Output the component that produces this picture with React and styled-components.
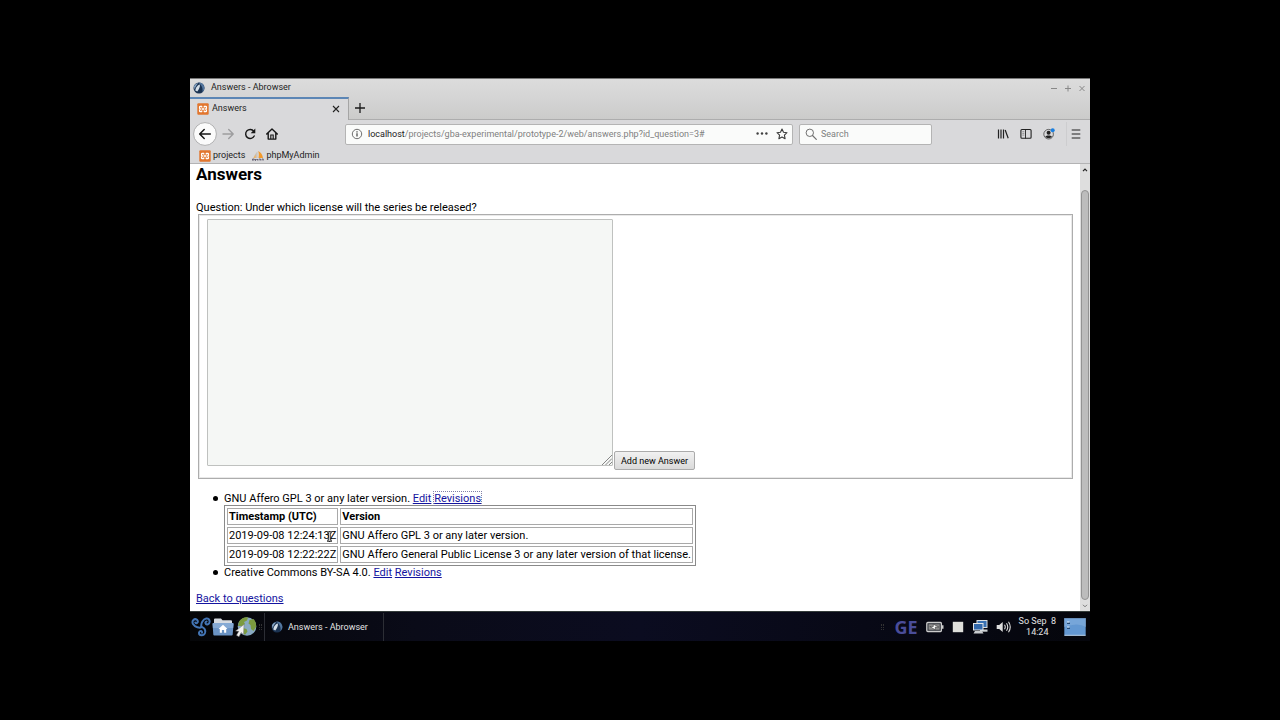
import React, { useState } from "react";
import styled, { createGlobalStyle } from "styled-components";

const revisions = [
	{ time: "2019-09-08 12:24:13Z", version: "GNU Affero GPL 3 or any later version." },
	{
		time: "2019-09-08 12:22:22Z",
		version: "GNU Affero General Public License 3 or any later version of that license.",
	},
];

const AbrowserIcon = () => (
	<svg width="12" height="12" viewBox="0 0 12 12" aria-hidden="true">
		<circle cx="6" cy="6" r="5.500" fill="#1b3352" />
		<path d="M5 .6A5.500 5.500 0 0 1 9.300 10.300C10.300 7 9 3 5 .6z" fill="#54779f" />
		<path d="M2.300 8.600C2.600 6 4.300 3 6.900 2.600 7.300 5 6 7.500 4.300 9.500z" fill="#d4dfe8" />
		<path d="M1 4.200C2 2.200 3.500 1.300 5.300 1.200 3.500 3 2.300 4.800 1.600 7.500z" fill="#8aa9c8" />
	</svg>
);

const XamppIcon = () => (
	<svg width="12" height="12" viewBox="0 0 12 12" aria-hidden="true">
		<rect x=".3" y=".3" width="11.400" height="11.400" rx="1" fill="#e2762e" />
		<path
			d="M5 4.500L4.600 3.300H3.200Q2.600 3.300 2.600 3.900V5.200L3.300 6 2.600 6.800V8.100Q2.600 8.700 3.200 8.700H4.600L5 7.500M7 4.500L7.400 3.300H8.800Q9.400 3.300 9.400 3.900V5.200L8.700 6 9.400 6.800V8.100Q9.400 8.700 8.800 8.700H7.400L7 7.500"
			fill="none"
			stroke="#fff"
			strokeWidth="1.300"
		/>
		<path d="M4.600 6h2.800" stroke="#fff" strokeWidth="1.600" />
	</svg>
);

const PmaIcon = () => (
	<svg width="12" height="12" viewBox="0 0 12 12" aria-hidden="true">
		<path d="M5.500 1.500C3.500 3 2.500 5 2 8h3.500z" fill="#c9c4bd" />
		<path d="M6.200 1C9 2.300 10.500 5 11 8H6.500C7 5.500 6.900 3 6.200 1z" fill="#f39a2b" />
		<path d="M3.500 4.200L1.300 8h2.500z" fill="#edb468" />
		<path d="M.5 10.500V9h1.800v1H.6M3.500 11V9l1 1 1-1v1.500M7 10.500V9h1.500v1.500M10 10.500V9h1.300v1.500" fill="none" stroke="#5a5568" strokeWidth=".8" />
	</svg>
);

const BackIcon = () => (
	<svg width="24" height="24" viewBox="0 0 24 24" aria-hidden="true">
		<circle cx="12" cy="12" r="11.400" fill="#fbfbfb" stroke="#a9a9aa" strokeWidth=".9" />
		<path d="M17.300 12H7M11.200 7.500L6.700 12l4.500 4.500" fill="none" stroke="#161616" strokeWidth="1.500" strokeLinecap="round" strokeLinejoin="round" />
	</svg>
);

const ForwardIcon = () => (
	<svg width="14" height="14" viewBox="0 0 14 14" aria-hidden="true">
		<path d="M2 7h10M7.700 2.500L12.200 7l-4.500 4.500" fill="none" stroke="#9d9d9f" strokeWidth="1.400" strokeLinecap="round" strokeLinejoin="round" />
	</svg>
);

const ReloadIcon = () => (
	<svg width="14" height="14" viewBox="0 0 14 14" aria-hidden="true">
		<path d="M10.800 4.300A4.500 4.500 0 1 0 11.200 9" fill="none" stroke="#161616" strokeWidth="1.400" strokeLinecap="round" />
		<path d="M12.300 1.600v4.600H7.700z" fill="#161616" />
	</svg>
);

const HomeIcon = () => (
	<svg width="14" height="14" viewBox="0 0 14 14" aria-hidden="true">
		<path d="M1.700 7L7 1.900 12.300 7M3.200 6.200v5.900h7.600V6.200" fill="none" stroke="#161616" strokeWidth="1.400" strokeLinecap="round" strokeLinejoin="round" />
		<path d="M5.800 12V8h2.400v4" fill="none" stroke="#161616" strokeWidth="1.100" />
	</svg>
);

const InfoIcon = () => (
	<svg width="12" height="12" viewBox="0 0 12 12" aria-hidden="true">
		<circle cx="6" cy="6" r="4.700" fill="none" stroke="#606060" strokeWidth=".9" />
		<path d="M6 5.300v3.200M6 3.300v1.100" stroke="#404040" strokeWidth="1.200" />
	</svg>
);

const DotsIcon = () => (
	<svg width="12" height="12" viewBox="0 0 12 12" aria-hidden="true">
		<circle cx="1.600" cy="5.500" r="1.200" fill="#404040" />
		<circle cx="6" cy="5.500" r="1.200" fill="#404040" />
		<circle cx="10.400" cy="5.500" r="1.200" fill="#404040" />
	</svg>
);

const StarIcon = () => (
	<svg width="12" height="12" viewBox="0 0 12 12" aria-hidden="true">
		<path d="M6 1.100l1.500 3.200 3.500.4-2.600 2.400.7 3.600L6 9l-3.100 1.700.7-3.600L1 4.700l3.500-.4z" fill="none" stroke="#3a3a3a" strokeWidth="1.100" strokeLinejoin="round" />
	</svg>
);

const SearchIcon = () => (
	<svg width="12" height="12" viewBox="0 0 12 12" aria-hidden="true">
		<circle cx="4.800" cy="4.800" r="3.700" fill="none" stroke="#707070" strokeWidth="1" />
		<path d="M7.500 7.500l3.800 3.800" stroke="#707070" strokeWidth="1.200" strokeLinecap="round" />
	</svg>
);

const LibraryIcon = () => (
	<svg width="12" height="12" viewBox="0 0 12 12" aria-hidden="true">
		<path d="M1.500 1.500v9M4 1.500v9M6.500 1.500v9M8.200 2l3 8.300" fill="none" stroke="#222" strokeWidth="1.200" />
	</svg>
);

const SidebarIcon = () => (
	<svg width="12" height="12" viewBox="0 0 12 12" aria-hidden="true">
		<rect x=".9" y="1.500" width="10.200" height="8.800" rx="1" fill="none" stroke="#222" strokeWidth="1.100" />
		<path d="M5.500 1.500v9" stroke="#222" strokeWidth=".9" />
		<path d="M2.300 3.700h2M2.300 5.400h2M2.300 7.100h2" stroke="#777" strokeWidth=".7" />
	</svg>
);

const AccountIcon = () => (
	<svg width="12" height="12" viewBox="0 0 12 12" aria-hidden="true">
		<circle cx="5.600" cy="6.200" r="4.800" fill="none" stroke="#555" strokeWidth=".9" />
		<circle cx="5.600" cy="4.800" r="2" fill="#222" />
		<path d="M2.200 8.800C3.500 7 7.700 7 9 8.800 7.500 10.600 3.700 10.600 2.200 8.800z" fill="#222" />
		<circle cx="9.700" cy="2.200" r="2" fill="#1a7fe0" />
	</svg>
);

const MenuIcon = () => (
	<svg width="10" height="12" viewBox="0 0 10 12" aria-hidden="true">
		<path d="M.7 2h8.600M.7 6h8.600M.7 10h8.600" stroke="#222" strokeWidth="1.100" />
	</svg>
);

const SwirlIcon = () => (
	<svg width="20" height="20" viewBox="0 0 20 20" aria-hidden="true">
		<g fill="none" stroke="#4375b5" strokeWidth="2" strokeLinecap="round">
			<path d="M10.500 10C8.800 11.500 4 10.300 2 7 .3 3.600 3.500.9 6 2.800 8 4.800 5.500 7.500 4.300 5.500" />
			<path d="M10.500 10C9.500 6.500 12 2.200 15.200 1.600c3.800-.5 4.500 4.400 1.700 5.700-2.700.8-3.300-2.500-1.300-2.800" />
			<path d="M10.500 10c3 .5 4.500 3.300 3.500 6-1.400 3.500-6.200 2.800-6-.3.500-2.500 3.500-2 3 0" />
		</g>
	</svg>
);

const FolderIcon = () => (
	<svg width="22" height="20" viewBox="0 0 22 20" aria-hidden="true">
		<path d="M2 9V2.500Q2 1.500 3 1.500h6l1.500 1.800H19q1 0 1 1V9z" fill="#d6dbe1" />
		<path d="M1.500 6h19q1 0 1 1l-.8 10.500q-.1 1-1 1H2.300q-1 0-1-1L.6 7q0-1 .9-1z" fill="#6b94c5" />
		<path d="M1.500 6h19q1 0 1 1l-.3 4H.9L.6 7q0-1 .9-1z" fill="#86aad4" />
		<path d="M11 7.700l4.500 4.300h-1.300v3.800h-2.100V13H9.900v2.800H7.800V12H6.500z" fill="#fff" />
	</svg>
);

const GlobeIcon = () => (
	<svg width="22" height="22" viewBox="0 0 22 22" aria-hidden="true">
		<circle cx="12" cy="10.500" r="9.300" fill="#89aac2" />
		<path d="M4 5.500C6.500 1.500 11 .5 13 1.500l-1 3-3 1.500 1 2-2.500 2L3 10zM14.500 4l4-1c2 2 3 5 2.500 8l-2.500 4-2.500-2-.5-4-2-1.500zM8 12l3.500 1 1 2.500-2.500 3.300C8 17.500 7.500 15 8 12z" fill="#7c9b3f" />
		<path d="M9 8.500l-.5 10-2.300-2L4 20.700 1.500 19.300l2.300-4L.6 15z" fill="#f3f3f3" stroke="#777" strokeWidth=".5" />
	</svg>
);

const BatteryIcon = () => (
	<svg width="18" height="12" viewBox="0 0 18 12" aria-hidden="true">
		<rect x=".8" y="1.500" width="14.600" height="9" rx="1" fill="#292c35" stroke="#ccc" strokeWidth="1.300" />
		<rect x="2.500" y="3.200" width="11.200" height="5.600" fill="#8d8d8d" />
		<path d="M16 4.300h1.500v3.400H16z" fill="#ccc" />
		<path d="M3.800 5.500h3.500V3.200L12.800 6H9.300v2.800z" fill="#fff" stroke="#222" strokeWidth=".5" />
	</svg>
);

const StopIcon = () => (
	<svg width="12" height="12" viewBox="0 0 12 12" aria-hidden="true">
		<rect x=".8" y=".8" width="10.400" height="10.400" fill="#dfdfdb" />
	</svg>
);

const NetworkIcon = () => (
	<svg width="16" height="16" viewBox="0 0 16 16" aria-hidden="true">
		<rect x="5" y="1.500" width="10" height="7" fill="#3971b3" stroke="#d9dee2" />
		<path d="M8 10.500h7.500v2.200H8z" fill="#ccd0d2" />
		<rect x="1.500" y="4.500" width="9.500" height="6.500" fill="#3268ab" stroke="#e2e5e8" />
		<path d="M3 12h7l1.500 2.500H1.500z" fill="#c9cccf" />
	</svg>
);

const VolumeIcon = () => (
	<svg width="15" height="14" viewBox="0 0 15 14" aria-hidden="true">
		<path d="M.7 5h2.500l3.500-3v10L3.200 9H.7z" fill="#ddd" />
		<path d="M8.500 4.700q1.500 2.300 0 4.600M10.500 3.200q2.500 3.800 0 7.600M12.500 1.700q3.500 5.300 0 10.600" fill="none" stroke="#ddd" strokeWidth="1.100" />
	</svg>
);

const DesktopIcon = () => (
	<svg width="22" height="18" viewBox="0 0 22 18" aria-hidden="true">
		<rect x=".3" y=".3" width="21.400" height="17.400" fill="#6398d2" />
		<path d="M22 0v9Q14 4 0 9V0z" fill="#8bb4e0" opacity=".5" />
		<path d="M.5 17.300h21" stroke="#b8cde0" />
		<path d="M3 5.200h3M3 10.200h3" stroke="#234a76" strokeWidth="1.600" />
		<path d="M3 4h2.500M3 9h2.500" stroke="#e2eefa" strokeWidth="1.200" />
	</svg>
);

const IBeam = () => (
	<svg width="7" height="11" viewBox="0 0 7 11" aria-hidden="true">
		<path d="M1 1h1.500l1 .8 1-.8H6M1 10h1.500l1-.8 1 .8H6M3.500 1.500v8" fill="none" stroke="#222" strokeWidth="2.400" />
		<path d="M1.200 1h1.500l.8.8.8-.8h1.500M1.200 10h1.500l.8-.8.8.8h1.500M3.500 1.500v8" fill="none" stroke="#ddd" strokeWidth=".9" />
	</svg>
);

const GripIcon = () => (
	<svg width="10" height="10" viewBox="0 0 10 10" aria-hidden="true">
		<path d="M0 10L10 0M3.500 10L10 3.500M7 10l3-3" stroke="#858585" />
	</svg>
);

function App() {
	const [answer, setAnswer] = useState("");
	const [search, setSearch] = useState("");

	return (
		<Screen>
			<GlobalStyle />
			<Chrome>
				<TitleBar>
					<AbrowserIcon />
					<WindowTitle>Answers - Abrowser</WindowTitle>
					<IconButton aria-label="Minimize">
						<svg width="8" height="8" viewBox="0 0 8 8"><path d="M1 4.500h6" stroke="#888" /></svg>
					</IconButton>
					<IconButton aria-label="Maximize">
						<svg width="8" height="8" viewBox="0 0 8 8"><path d="M1 4.500h6M4 1.500v6" stroke="#888" /></svg>
					</IconButton>
					<IconButton aria-label="Close">
						<svg width="8" height="8" viewBox="0 0 8 8"><path d="M1.500 2l5 5M6.500 2l-5 5" stroke="#888" /></svg>
					</IconButton>
				</TitleBar>
				<TabStrip>
					<Tab>
						<XamppIcon />
						<TabName>Answers</TabName>
						<IconButton aria-label="Close tab">
							<svg width="8" height="8" viewBox="0 0 8 8"><path d="M1 1l6 6M7 1L1 7" stroke="#222" strokeWidth="1.100" /></svg>
						</IconButton>
					</Tab>
					<NewTab aria-label="New tab">
						<svg width="10" height="10" viewBox="0 0 10 10"><path d="M0 5h10M5 0v10" stroke="#1b1b1b" strokeWidth="1.300" /></svg>
					</NewTab>
				</TabStrip>
				<Toolbar>
					<Navigation>
						<BackButton aria-label="Back"><BackIcon /></BackButton>
						<IconButton aria-label="Forward"><ForwardIcon /></IconButton>
						<IconButton aria-label="Reload"><ReloadIcon /></IconButton>
						<IconButton aria-label="Home"><HomeIcon /></IconButton>
					</Navigation>
					<AddressBar>
						<InfoIcon />
						<Address>
							<b>localhost</b>/projects/gba-experimental/prototype-2/web/answers.php?id_question=3#
						</Address>
						<IconButton aria-label="Page actions"><DotsIcon /></IconButton>
						<IconButton aria-label="Bookmark this page"><StarIcon /></IconButton>
					</AddressBar>
					<SearchBar>
						<SearchIcon />
						<SearchInput
							aria-label="Search"
							placeholder="Search"
							value={search}
							onChange={(e) => setSearch(e.target.value)}
						/>
					</SearchBar>
					<Tools>
						<IconButton aria-label="Library"><LibraryIcon /></IconButton>
						<IconButton aria-label="Sidebars"><SidebarIcon /></IconButton>
						<IconButton aria-label="Account"><AccountIcon /></IconButton>
						<MenuButton aria-label="Menu"><MenuIcon /></MenuButton>
					</Tools>
				</Toolbar>
				<Bookmarks>
					<Bookmark href="#projects"><XamppIcon />projects</Bookmark>
					<Bookmark href="#phpmyadmin"><PmaIcon />phpMyAdmin</Bookmark>
				</Bookmarks>
			</Chrome>
			<Viewport>
				<Content>
					<Heading>Answers</Heading>
					<Question htmlFor="answer">
						Question: Under which license will the series be released?
					</Question>
					<Fieldset>
						<AnswerBox>
							<Textarea id="answer" value={answer} onChange={(e) => setAnswer(e.target.value)} />
							<Grip><GripIcon /></Grip>
						</AnswerBox>
						<AddButton type="button">Add new Answer</AddButton>
					</Fieldset>
					<AnswerList>
						<Answer>
							GNU Affero GPL 3 or any later version. <Link href="#edit">Edit</Link>{" "}
							<Link href="#revisions" $focused>Revisions</Link>
							<Table>
								<thead>
									<tr>
										<th>Timestamp (UTC)</th>
										<th>Version</th>
									</tr>
								</thead>
								<tbody>
									{revisions.map((item, index) => (
										<tr key={item.time}>
											<td>
												{item.time}
												{index === 0 && <Pointer><IBeam /></Pointer>}
											</td>
											<td>{item.version}</td>
										</tr>
									))}
								</tbody>
							</Table>
						</Answer>
						<Answer>
							Creative Commons BY-SA 4.0. <Link href="#edit-2">Edit</Link>{" "}
							<Link href="#revisions-2">Revisions</Link>
						</Answer>
					</AnswerList>
					<Link href="#questions">Back to questions</Link>
				</Content>
				<Scrollbar>
					<ScrollArrow>
						<svg width="6" height="4" viewBox="0 0 6 4"><path d="M1 3.200l2-2 2 2" fill="none" stroke="#222" strokeWidth="1.200" /></svg>
					</ScrollArrow>
					<ScrollTrack><ScrollThumb /></ScrollTrack>
					<ScrollArrow>
						<svg width="6" height="4" viewBox="0 0 6 4"><path d="M1 .8l2 2 2-2" fill="none" stroke="#777" /></svg>
					</ScrollArrow>
				</Scrollbar>
			</Viewport>
			<Taskbar>
				<Launchers>
					<IconButton aria-label="Applications"><SwirlIcon /></IconButton>
					<IconButton aria-label="Files"><FolderIcon /></IconButton>
					<IconButton aria-label="Web browser"><GlobeIcon /></IconButton>
				</Launchers>
				<Handle />
				<Task><AbrowserIcon />Answers - Abrowser</Task>
				<Tray>
					<Handle />
					<Layout>GE</Layout>
					<BatteryIcon />
					<StopIcon />
					<NetworkIcon />
					<VolumeIcon />
					<Clock>
						<span>So Sep &nbsp;8</span>
						<span>14:24</span>
					</Clock>
					<IconButton aria-label="Show desktop"><DesktopIcon /></IconButton>
				</Tray>
			</Taskbar>
		</Screen>
	);
}

export default App;

const GlobalStyle = createGlobalStyle`
	body {
		margin: 0;
		background: #000;
		color: #000;
		font-family: Roboto, sans-serif;
		font-size: 11px;
		line-height: 13px;
	}
	* {
		box-sizing: border-box;
	}
	svg {
		display: block;
		flex-shrink: 0;
	}
	button,
	input,
	textarea {
		font-family: inherit;
	}
`;
const Screen = styled.div`
	padding: 78px 190px;
`;
const Chrome = styled.header`
	background: #d9d9db;
	border-top: 1px solid #777;
	border-bottom: 1px solid #b3b3b4;
	font-size: 9px;
	color: #222;
`;
const TitleBar = styled.div`
	display: flex;
	align-items: center;
	gap: 6px;
	height: 18px;
	padding: 0 4px 1px 3px;
	background: linear-gradient(#dcdcdc, #d5d5d5);
`;
const WindowTitle = styled.span`
	flex: 1;
`;
const IconButton = styled.button`
	display: flex;
	align-items: center;
	padding: 0;
	border: 0;
	background: none;
	cursor: pointer;
`;
const TabStrip = styled.div`
	display: flex;
	height: 23px;
	background: linear-gradient(#d5d5d5, #cbcbca);
	box-shadow: inset 0 -1px #adadad;
`;
const Tab = styled.div`
	display: flex;
	align-items: center;
	gap: 3px;
	width: 159px;
	padding: 0 8px 2px 7px;
	background: #d9d9db;
	border-top: 2px solid #5c86b5;
	border-right: 1px solid #a5a5a5;
`;
const TabName = styled.span`
	flex: 1;
`;
const NewTab = styled(IconButton)`
	padding: 0 6px 2px;
`;
const Toolbar = styled.div`
	display: flex;
	align-items: center;
	height: 28px;
	padding: 0 9px 0 3px;
`;
const Navigation = styled.div`
	display: flex;
	align-items: center;
	gap: 8px;
	width: 152px;
	flex-shrink: 0;
`;
const BackButton = styled(IconButton)`
	margin-right: -4px;
`;
const AddressBar = styled.div`
	display: flex;
	align-items: center;
	gap: 8px;
	flex: 1;
	height: 21px;
	padding: 0 4px 0 5px;
	background: #fafbfa;
	border: 1px solid #b4b4b4;
	border-radius: 2px;
`;
const Address = styled.span`
	flex: 1;
	color: #808080;
	white-space: nowrap;
	margin-left: -3px;
	b {
		color: #222;
		font-weight: 400;
	}
`;
const SearchBar = styled.div`
	display: flex;
	align-items: center;
	gap: 4px;
	width: 133px;
	height: 21px;
	margin-left: 6px;
	padding: 0 5px;
	background: #fafbfa;
	border: 1px solid #b4b4b4;
	border-radius: 2px;
`;
const SearchInput = styled.input`
	width: 100%;
	padding: 0;
	border: 0;
	outline: 0;
	background: none;
	font-size: 9px;
	&::placeholder {
		color: #808080;
		opacity: 1;
	}
`;
const Tools = styled.div`
	display: flex;
	align-items: center;
	gap: 11px;
	margin-left: 65px;
`;
const MenuButton = styled(IconButton)`
	height: 24px;
	padding-left: 4px;
	border-left: 1px solid #cdcdcf;
`;
const Bookmarks = styled.nav`
	display: flex;
	gap: 7px;
	padding: 1px 0 1px 9px;
`;
const Bookmark = styled.a`
	display: flex;
	align-items: center;
	gap: 2px;
	height: 13px;
	color: #222;
	text-decoration: none;
`;
const Viewport = styled.div`
	display: flex;
	background: #fff;
`;
const Content = styled.main`
	flex: 1;
	padding: 0 7px 6px 6px;
`;
const Heading = styled.h1`
	margin: 0 0 17px;
	font-size: 17px;
	line-height: 20px;
`;
const Question = styled.label`
	display: block;
`;
const Fieldset = styled.fieldset`
	display: flex;
	align-items: flex-end;
	margin: 0 0 0 2px;
	padding: 4px 8px 8px;
	border: 1px solid #adadad;
	box-shadow: inset 0 0 0 1px #e9e9e9;
`;
const AnswerBox = styled.div`
	position: relative;
	margin-bottom: 4px;
`;
const Textarea = styled.textarea`
	display: block;
	width: 406px;
	height: 247px;
	padding: 2px;
	border: 1px solid #bfc1bf;
	border-radius: 1px;
	background: #f5f7f5;
	font-size: 11px;
	resize: none;
`;
const Grip = styled.span`
	position: absolute;
	right: 1px;
	bottom: 1px;
	pointer-events: none;
`;
const AddButton = styled.button`
	height: 19px;
	margin-left: 1px;
	padding: 0 6px;
	border: 1px solid #ababab;
	border-radius: 2px;
	background: linear-gradient(#f1f1f1, #dadada);
	color: #000;
	font-size: 9px;
	cursor: pointer;
`;
const AnswerList = styled.ul`
	margin: 13px 0;
	padding-left: 28px;
	list-style: none;
`;
const Answer = styled.li`
	&::before {
		content: "";
		display: inline-block;
		width: 5px;
		height: 5px;
		margin: 0 6px 0 -11px;
		border-radius: 50%;
		background: #000;
		vertical-align: 1px;
	}
`;
const Link = styled.a`
	color: #1414a0;
	outline: ${(props) => (props.$focused ? "1px dotted #8080a8" : "none")};
`;
const Table = styled.table`
	border: 1px solid #8a8a8a;
	border-spacing: 2px;
	th,
	td {
		position: relative;
		padding: 1px;
		border: 1px solid #a9a9a9;
		text-align: left;
		white-space: nowrap;
	}
`;
const Pointer = styled.span`
	position: absolute;
	right: 4px;
	top: 3px;
`;
const Scrollbar = styled.div`
	display: flex;
	flex-direction: column;
	width: 10px;
	background: #dedede;
`;
const ScrollArrow = styled.span`
	display: flex;
	align-items: center;
	justify-content: center;
	height: 11px;
`;
const ScrollTrack = styled.div`
	flex: 1;
	padding: 15px 1px 0;
`;
const ScrollThumb = styled.div`
	height: 100%;
	border: 1px solid #929292;
	border-radius: 4px;
	background: #bcbcbc;
`;
const Taskbar = styled.footer`
	display: flex;
	align-items: center;
	height: 30px;
	padding: 0 4px 0 1px;
	border-top: 1px solid #343c3a;
	background: linear-gradient(90deg, #050608, #0a0b18 25%, #0b0c20 50%, #080916 75%, #05060c);
	color: #e4e4e4;
	font-size: 9px;
`;
const Launchers = styled.div`
	display: flex;
	align-items: center;
	gap: 1px;
`;
const Handle = styled.span`
	width: 3px;
	height: 6px;
	margin: 0 2px;
	border: 1px dotted #333;
`;
const Task = styled.button`
	display: flex;
	align-items: center;
	gap: 5px;
	width: 120px;
	height: 28px;
	padding: 0 6px;
	border: 0;
	border-left: 1px solid #2c2e35;
	border-right: 1px solid #2c2e35;
	background: none;
	color: inherit;
	font-size: 9px;
	white-space: nowrap;
`;
const Tray = styled.div`
	display: flex;
	align-items: center;
	gap: 8px;
	margin-left: auto;
`;
const Layout = styled.span`
	font-family: "Noto Sans", sans-serif;
	font-size: 18px;
	font-weight: 700;
	line-height: 20px;
	color: #4a4d99;
`;
const Clock = styled.time`
	display: flex;
	flex-direction: column;
	align-items: center;
	line-height: 11px;
`;
